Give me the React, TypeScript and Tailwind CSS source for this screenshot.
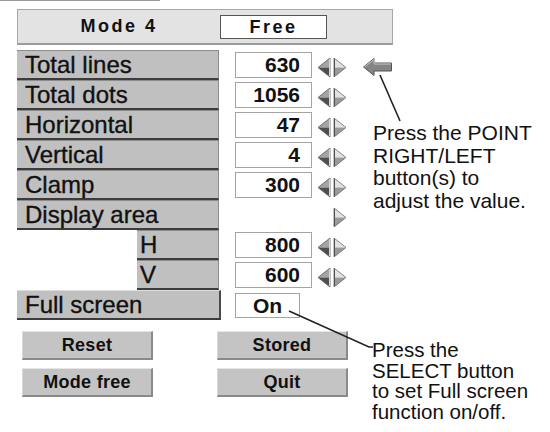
import React from "react";

const PairArrows = ({ only }: { only?: "right" }) => (
  <svg width="29" height="19" viewBox="0 0 29 19">
    {only !== "right" && (
      <g>
        <polygon points="0,9.5 12,0 12,9.5" fill="#a4a4a4" />
        <polygon points="0,9.5 12,9.5 12,19" fill="#4e4e4e" />
        <polygon points="0,9.5 12,0 12,19" fill="none" stroke="#5a5a5a" strokeWidth="0.8" />
        <line x1="11.5" y1="1" x2="11.5" y2="18" stroke="#d8d8d8" strokeWidth="1" />
      </g>
    )}
    <g>
      <polygon points="28,9.5 16,0 16,9.5" fill="#e2e2e2" />
      <polygon points="28,9.5 16,9.5 16,19" fill="#9a9a9a" />
      <polygon points="28,9.5 16,0 16,19" fill="none" stroke="#6a6a6a" strokeWidth="0.8" />
      <line x1="16.5" y1="1" x2="16.5" y2="18" stroke="#505050" strokeWidth="1" />
    </g>
  </svg>
);

const BigArrow = () => (
  <svg width="29" height="19" viewBox="0 0 29 19">
    <polygon
      points="0.5,9 11,0.5 11,5 28.5,5 28.5,13 11,13 11,17.5"
      fill="#858585"
      stroke="#555"
      strokeWidth="1"
    />
    <polyline points="1.5,9 11,1.5 11,6 28,6" fill="none" stroke="#c8c8c8" strokeWidth="1" />
  </svg>
);

const Label = ({ children }: { children: React.ReactNode }) => (
  <div className="box-border h-[30px] w-[202px] bg-[#c0c0c0] border-t border-r border-t-[#8c8c8c] border-r-[#8c8c8c] border-b-2 border-b-[#3c3c3c] pl-[8px] text-[24px] leading-[27px] whitespace-nowrap [-webkit-text-stroke:0.35px_#111]">
    {children}
  </div>
);

const Value = ({ v }: { v: string }) => (
  <div className="box-border ml-[16px] mt-[2px] w-[77px] h-[26px] bg-white border border-[#a4a4a4] text-right pr-[11px] font-bold text-[21px] leading-[24px]">
    {v}
  </div>
);

const Row = ({ label, value }: { label: string; value: string }) => (
  <div className="flex h-[30px] items-start">
    <Label>{label}</Label>
    <Value v={value} />
    <div className="ml-[6px] mt-[8px] flex">
      <PairArrows />
    </div>
  </div>
);

const SubRow = ({ label, value }: { label: string; value: string }) => (
  <div className="flex h-[30px] items-start">
    <div className="box-border ml-[120px] h-[30px] w-[82px] bg-[#c0c0c0] border-t border-r border-t-[#8c8c8c] border-r-[#8c8c8c] border-b-2 border-b-[#3c3c3c] pl-[3px] text-[24px] leading-[27px] [-webkit-text-stroke:0.35px_#111]">
      {label}
    </div>
    <Value v={value} />
    <div className="ml-[6px] mt-[8px] flex">
      <PairArrows />
    </div>
  </div>
);

const Btn = ({ children }: { children: React.ReactNode }) => (
  <div className="box-border w-[131px] h-[29px] bg-[#c4c4c4] border-t border-t-[#e6e6e6] border-l border-l-[#d8d8d8] border-r-2 border-r-[#8a8a8a] border-b-2 border-b-[#8a8a8a] flex items-center justify-center font-bold text-[18px] tracking-[0.3px]">
    {children}
  </div>
);

export default function App() {
  return (
    <div className="relative w-[550px] h-[432px] bg-white overflow-hidden text-[#111] font-['Liberation_Sans',Arial,sans-serif]">
      <div className="h-px w-[160px] bg-[#9a9a9a]" />
      <div className="ml-[17px] mt-[8px] w-[376px]">
        <div className="box-border flex h-[36px] items-center bg-[#e3e3e3] border border-[#a8a8a8] border-b-2 border-b-[#9a9a9a]">
          <div className="w-[202px] text-center font-bold text-[18px] tracking-[2.5px]">Mode 4</div>
          <div className="box-border w-[107px] h-[24px] bg-white border border-[#555] flex items-center justify-center font-bold text-[18px] tracking-[2.5px] leading-none">
            Free
          </div>
        </div>
      </div>
      <div className="flex ml-[17px] mt-[5px]">
        <div className="w-[331px] flex flex-col">
          <Row label="Total lines" value="630" />
          <Row label="Total dots" value="1056" />
          <Row label="Horizontal" value="47" />
          <Row label="Vertical" value="4" />
          <Row label="Clamp" value="300" />
          <div className="flex h-[30px] items-start">
            <Label>Display area</Label>
            <div className="ml-[16px] w-[77px]" />
            <div className="ml-[6px] mt-[8px] flex">
              <PairArrows only="right" />
            </div>
          </div>
          <SubRow label="H" value="800" />
          <SubRow label="V" value="600" />
          <div className="flex h-[30px] items-start">
            <div className="box-border h-[30px] w-[204px] bg-[#c0c0c0] border-t border-t-[#dcdcdc] border-r-2 border-r-[#4a4a4a] border-b-2 border-b-[#3c3c3c] pl-[8px] text-[24px] leading-[27px] [-webkit-text-stroke:0.35px_#111]">
              Full screen
            </div>
            <div className="box-border ml-[14px] mt-[3px] w-[65px] h-[25px] bg-white border border-[#a4a4a4] text-center font-bold text-[21px] leading-[23px]">
              On
            </div>
          </div>
          <div className="flex mt-[11px] ml-[5px] gap-[64px]">
            <Btn>Reset</Btn>
            <Btn>Stored</Btn>
          </div>
          <div className="flex mt-[8px] ml-[5px] gap-[64px]">
            <Btn>Mode free</Btn>
            <Btn>Quit</Btn>
          </div>
        </div>
        <div className="flex flex-col ml-[15px]">
          <div className="mt-[8px]">
            <BigArrow />
          </div>
          <div className="ml-[10px] mt-[45px] text-[21px] leading-[22.5px] whitespace-nowrap">
            Press the POINT
            <br />
            RIGHT/LEFT
            <br />
            button(s) to
            <br />
            adjust the value.
          </div>
          <div className="ml-[9px] mt-[128px] text-[20.5px] leading-[20.5px] whitespace-nowrap">
            Press the
            <br />
            SELECT button
            <br />
            to set Full screen
            <br />
            function on/off.
          </div>
        </div>
      </div>
      <svg className="pointer-events-none absolute inset-0" width="550" height="432">
        <line x1="380" y1="75" x2="400" y2="121" stroke="#222" strokeWidth="1.6" />
        <polyline points="289,311 369,347 373,347" fill="none" stroke="#222" strokeWidth="1.6" />
      </svg>
    </div>
  );
}
